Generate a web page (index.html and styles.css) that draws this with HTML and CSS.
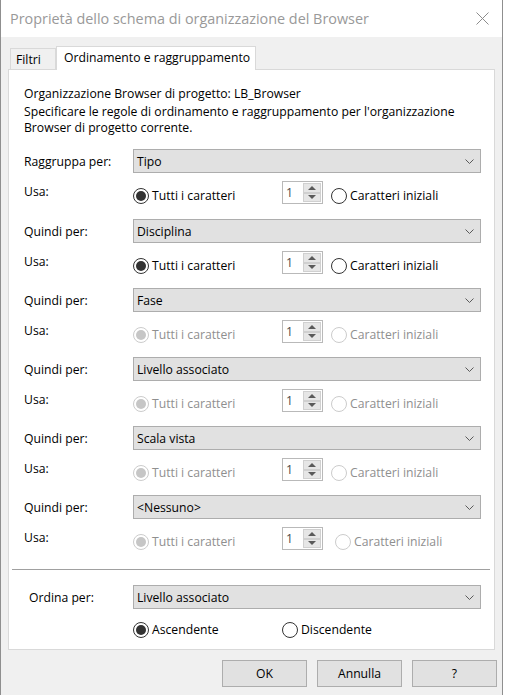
FILE: index.html
```html
<!DOCTYPE html>
<html lang="it">
<head>
<meta charset="utf-8">
<title>Proprietà dello schema di organizzazione del Browser</title>
<link rel="stylesheet" href="styles.css">
</head>
<body>
<div class="window">
  <div class="titlebar">
    <span class="title">Proprietà dello schema di organizzazione del Browser</span>
    <svg class="close" width="13" height="13" viewBox="0 0 13 13"><path d="M0.5 0.5L12.5 12.5M12.5 0.5L0.5 12.5" stroke="#8c8c8c" stroke-width="1" fill="none"/></svg>
  </div>
  <div class="client">
    <div class="tabs">
      <div class="tab">Filtri</div>
      <div class="tab active">Ordinamento e raggruppamento</div>
    </div>
    <div class="panel">
      <div class="intro">
        <p class="projname">Organizzazione Browser di progetto: LB_Browser</p>
        <p class="desc">Specificare le regole di ordinamento e raggruppamento per l'organizzazione<br>Browser di progetto corrente.</p>
      </div>
      <div class="groups">
        <div class="group first">
          <div class="row selrow"><span class="lbl">Raggruppa per:</span><div class="select"><span>Tipo</span><svg class="chev" width="9" height="5" viewBox="0 0 9 5"><path d="M0.5 0.5L4.5 4.5L8.5 0.5" stroke="#5a5a5a" fill="none"/></svg></div></div>
          <div class="row usarow"><span class="lbl usa">Usa:</span>
            <div class="usactl">
              <label class="radio checked"><span class="circle"></span>Tutti i caratteri</label>
              <div class="spin"><span class="spinval">1</span><span class="spinbtns"><span class="sb up"></span><span class="sb down"></span></span></div>
              <label class="radio"><span class="circle"></span>Caratteri iniziali</label>
            </div>
          </div>
        </div>
        <div class="group">
          <div class="row selrow"><span class="lbl">Quindi per:</span><div class="select"><span>Disciplina</span><svg class="chev" width="9" height="5" viewBox="0 0 9 5"><path d="M0.5 0.5L4.5 4.5L8.5 0.5" stroke="#5a5a5a" fill="none"/></svg></div></div>
          <div class="row usarow"><span class="lbl usa">Usa:</span>
            <div class="usactl">
              <label class="radio checked"><span class="circle"></span>Tutti i caratteri</label>
              <div class="spin"><span class="spinval">1</span><span class="spinbtns"><span class="sb up"></span><span class="sb down"></span></span></div>
              <label class="radio"><span class="circle"></span>Caratteri iniziali</label>
            </div>
          </div>
        </div>
        <div class="group">
          <div class="row selrow"><span class="lbl">Quindi per:</span><div class="select"><span>Fase</span><svg class="chev" width="9" height="5" viewBox="0 0 9 5"><path d="M0.5 0.5L4.5 4.5L8.5 0.5" stroke="#5a5a5a" fill="none"/></svg></div></div>
          <div class="row usarow"><span class="lbl usa">Usa:</span>
            <div class="usactl">
              <label class="radio checked disabled"><span class="circle"></span>Tutti i caratteri</label>
              <div class="spin"><span class="spinval">1</span><span class="spinbtns"><span class="sb up"></span><span class="sb down"></span></span></div>
              <label class="radio disabled"><span class="circle"></span>Caratteri iniziali</label>
            </div>
          </div>
        </div>
        <div class="group">
          <div class="row selrow"><span class="lbl">Quindi per:</span><div class="select"><span>Livello associato</span><svg class="chev" width="9" height="5" viewBox="0 0 9 5"><path d="M0.5 0.5L4.5 4.5L8.5 0.5" stroke="#5a5a5a" fill="none"/></svg></div></div>
          <div class="row usarow"><span class="lbl usa">Usa:</span>
            <div class="usactl">
              <label class="radio checked disabled"><span class="circle"></span>Tutti i caratteri</label>
              <div class="spin"><span class="spinval">1</span><span class="spinbtns"><span class="sb up"></span><span class="sb down"></span></span></div>
              <label class="radio disabled"><span class="circle"></span>Caratteri iniziali</label>
            </div>
          </div>
        </div>
        <div class="group">
          <div class="row selrow"><span class="lbl">Quindi per:</span><div class="select"><span>Scala vista</span><svg class="chev" width="9" height="5" viewBox="0 0 9 5"><path d="M0.5 0.5L4.5 4.5L8.5 0.5" stroke="#5a5a5a" fill="none"/></svg></div></div>
          <div class="row usarow"><span class="lbl usa">Usa:</span>
            <div class="usactl">
              <label class="radio checked disabled"><span class="circle"></span>Tutti i caratteri</label>
              <div class="spin"><span class="spinval">1</span><span class="spinbtns"><span class="sb up"></span><span class="sb down"></span></span></div>
              <label class="radio disabled"><span class="circle"></span>Caratteri iniziali</label>
            </div>
          </div>
        </div>
        <div class="group last">
          <div class="row selrow"><span class="lbl">Quindi per:</span><div class="select"><span>&lt;Nessuno&gt;</span><svg class="chev" width="9" height="5" viewBox="0 0 9 5"><path d="M0.5 0.5L4.5 4.5L8.5 0.5" stroke="#5a5a5a" fill="none"/></svg></div></div>
          <div class="row usarow"><span class="lbl usa">Usa:</span>
            <div class="usactl">
              <label class="radio checked disabled"><span class="circle"></span>Tutti i caratteri</label>
              <div class="spin"><span class="spinval">1</span><span class="spinbtns"><span class="sb up"></span><span class="sb down"></span></span></div>
              <label class="radio disabled shift"><span class="circle"></span>Caratteri iniziali</label>
            </div>
          </div>
        </div>
      </div>
      <div class="sep"></div>
      <div class="order">
        <div class="row selrow orderrow"><span class="lbl">Ordina per:</span><div class="select"><span>Livello associato</span><svg class="chev" width="9" height="5" viewBox="0 0 9 5"><path d="M0.5 0.5L4.5 4.5L8.5 0.5" stroke="#5a5a5a" fill="none"/></svg></div></div>
        <div class="row orderrow dirrow"><span class="lbl"></span>
          <div class="dirctl">
            <label class="radio checked wide"><span class="circle"></span>Ascendente</label>
            <label class="radio"><span class="circle"></span>Discendente</label>
          </div>
        </div>
      </div>
    </div>
    <div class="buttons">
      <div class="btn">OK</div>
      <div class="btn">Annulla</div>
      <div class="btn">?</div>
    </div>
  </div>
</div>
</body>
</html>
```
FILE: styles.css
```css
html, body {
  margin: 0;
  padding: 0;
  background: #ffffff;
}
body {
  font-family: "Open Sans", "Liberation Sans", Arial, sans-serif;
  font-size: 12.2px;
  color: #000;
}
p { margin: 0; }

.window {
  width: 503px;
  height: 695px;
  box-sizing: border-box;
  border-left: 1px solid #8f8f8f;
  border-right: 1px solid #8f8f8f;
  background: #f0f0f0;
  display: flex;
  flex-direction: column;
}

.titlebar {
  height: 37px;
  flex: none;
  background: #fff;
  display: flex;
  align-items: center;
  justify-content: space-between;
  padding: 0 13px 0 9px;
}
.title {
  font-size: 14.4px;
  color: #999999;
  white-space: nowrap;
}
.close { display: block; }

.client {
  flex: 1;
  padding: 0 7px 0 7px;
  display: flex;
  flex-direction: column;
}

.tabs {
  display: flex;
  align-items: flex-end;
  margin-top: 9px;
  margin-bottom: -1px;
  padding-left: 2px;
  height: 24px;
  position: relative;
  z-index: 1;
}
.tab {
  box-sizing: border-box;
  border: 1px solid #d9d9d9;
  border-bottom: none;
  background: #f0f0f0;
  white-space: nowrap;
}
.tab:first-child {
  width: 46px;
  height: 21px;
  margin-bottom: 1px;
  padding-left: 5px;
  line-height: 22px;
}
.tab.active {
  width: 200px;
  height: 24px;
  background: #fff;
  padding-left: 7px;
  line-height: 21px;
}

.panel {
  height: 581px;
  box-sizing: border-box;
  background: #fff;
  border: 1px solid #d9d9d9;
}

.intro {
  padding: 16px 0 0 15px;
  line-height: 16px;
}
.desc { margin-top: 2px; }

.groups {
  margin-top: 13px;
  padding: 0 13px 0 15px;
}
.group { margin-bottom: 14px; }
.group.first { margin-bottom: 15px; }
.group.last { margin-bottom: 0; }

.row {
  display: grid;
  grid-template-columns: 109px 1fr;
}
.selrow { height: 24px; align-items: center; }
.usarow { height: 23px; margin-top: 8px; }

.lbl { white-space: nowrap; }
.lbl.usa { line-height: 16px; padding-top: 3px; }

.select {
  box-sizing: border-box;
  height: 24px;
  background: #e1e1e1;
  border: 1px solid #adadad;
  display: flex;
  align-items: center;
  justify-content: space-between;
  padding: 0 6px 0 3px;
}
.chev { display: block; }

.usactl {
  display: grid;
  grid-template-columns: 141px 41px auto;
  column-gap: 8px;
  align-items: start;
}

.radio {
  display: flex;
  align-items: center;
  line-height: 16px;
  height: 16px;
  white-space: nowrap;
}
.usactl .radio { margin-top: 7px; }
.radio .circle {
  width: 16px;
  height: 16px;
  box-sizing: border-box;
  border: 1px solid #333333;
  border-radius: 50%;
  background: #fff;
  margin-right: 3px;
  display: flex;
  align-items: center;
  justify-content: center;
  flex: none;
}
.radio.checked .circle::after {
  content: "";
  width: 10px;
  height: 10px;
  border-radius: 50%;
  background: #333333;
}
.radio.disabled { color: #8f8f8f; }
.radio.disabled .circle { border-color: #cccccc; }
.radio.disabled.checked .circle::after { background: #c6c6c6; }
.radio.shift { margin-left: 4px; }

.spin {
  width: 41px;
  height: 23px;
  box-sizing: border-box;
  border: 1px solid #b9b9b9;
  background: #fff;
  display: flex;
}
.spinval {
  flex: 1;
  padding-left: 3px;
  line-height: 21px;
  color: #4a4a4a;
}
.spinbtns {
  width: 19px;
  display: flex;
  flex-direction: column;
  padding: 1px 1px 1px 0;
  box-sizing: border-box;
}
.sb {
  flex: 1;
  background: #e6e6e6;
  border: 1px solid #d0d0d0;
  display: flex;
  align-items: center;
  justify-content: center;
}
.sb.up::after {
  content: "";
  border-left: 4px solid transparent;
  border-right: 4px solid transparent;
  border-bottom: 4px solid #5a5a5a;
}
.sb.down::after {
  content: "";
  border-left: 4px solid transparent;
  border-right: 4px solid transparent;
  border-top: 4px solid #5a5a5a;
}

.sep {
  height: 1px;
  background: #a0a0a0;
  margin: 19px 4px 0 3px;
}

.order {
  padding: 0 13px 0 20px;
}
.orderrow { grid-template-columns: 104px 1fr; }
.order .selrow { margin-top: 15px; }
.dirrow { margin-top: 13px; }
.dirctl { display: flex; }
.radio.wide { width: 149px; }

.buttons {
  display: flex;
  justify-content: flex-end;
  gap: 10px;
  margin-top: 10px;
  padding-right: 0;
  margin-right: -2px;
}
.btn {
  width: 85px;
  height: 27px;
  box-sizing: border-box;
  background: #e1e1e1;
  border: 1px solid #adadad;
  display: flex;
  align-items: center;
  justify-content: center;
}
```
